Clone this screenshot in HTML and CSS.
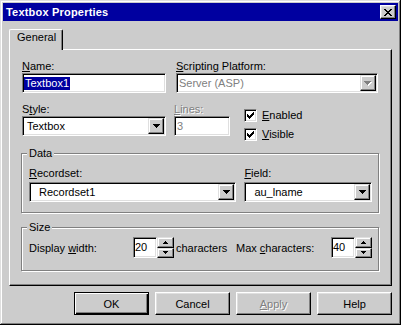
FILE: index.html
```html
<!DOCTYPE html>
<html lang="en">
<head>
    <meta charset="UTF-8">
    <title>Textbox Properties</title>
    <link rel="stylesheet" href="styles.css">
</head>
<body>
    <div class="window">
        <div class="titlebar">
            <span class="title">Textbox Properties</span>
            <button class="close" aria-label="Close">
                <svg width="8" height="7" viewBox="0 0 8 7"><path d="M0 0h2v1h-2z M6 0h2v1h-2z M1 1h2v1h-2z M5 1h2v1h-2z M2 2h4v1h-4z M3 3h2v1h-2z M2 4h4v1h-4z M1 5h2v1h-2z M5 5h2v1h-2z M0 6h2v1h-2z M6 6h2v1h-2z" fill="#000"/></svg>
            </button>
        </div>

        <div class="body">
            <div class="tabs">
                <div class="tab active">General</div>
            </div>

            <div class="panel">
                <div class="row">
                    <div class="field name-field">
                        <label><u>N</u>ame:</label>
                        <div class="edit"><span class="sel">Textbox1</span></div>
                    </div>
                    <div class="field script-field">
                        <label><u>S</u>cripting Platform:</label>
                        <div class="combo disabled">
                            <span class="value pad-2 dis">Server (ASP)</span>
                            <span class="drop">
                                <svg width="8" height="5" viewBox="0 0 8 5"><path d="M1 1h7v1h-1v1h-1v1h-1v1h-1v-1h-1v-1h-1v-1h-1z" fill="#fff"/><path d="M0 0h7v1h-1v1h-1v1h-1v1h-1v-1h-1v-1h-1v-1h-1z" fill="#808080"/></svg>
                            </span>
                        </div>
                    </div>
                </div>

                <div class="row row-style">
                    <div class="field style-field">
                        <label>S<u>t</u>yle:</label>
                        <div class="combo">
                            <span class="value pad-4">Textbox</span>
                            <span class="drop">
                                <svg width="7" height="4" viewBox="0 0 7 4"><path d="M0 0h7v1h-1v1h-1v1h-1v1h-1v-1h-1v-1h-1v-1h-1z" fill="#000"/></svg>
                            </span>
                        </div>
                    </div>
                    <div class="field lines-field">
                        <label class="dis"><u>L</u>ines:</label>
                        <div class="edit"><span class="value pad-1 dis">3</span></div>
                    </div>
                    <div class="checks">
                        <div class="check">
                            <span class="box">
                                <svg width="7" height="7" viewBox="0 0 7 7"><path d="M6 0h1v1h-1z M5 1h2v1h-2z M0 2h1v1h-1z M4 2h3v1h-3z M0 3h2v1h-2z M3 3h3v1h-3z M0 4h5v1h-5z M1 5h3v1h-3z M2 6h1v1h-1z" fill="#000"/></svg>
                            </span>
                            <span><u>E</u>nabled</span>
                        </div>
                        <div class="check">
                            <span class="box">
                                <svg width="7" height="7" viewBox="0 0 7 7"><path d="M6 0h1v1h-1z M5 1h2v1h-2z M0 2h1v1h-1z M4 2h3v1h-3z M0 3h2v1h-2z M3 3h3v1h-3z M0 4h5v1h-5z M1 5h3v1h-3z M2 6h1v1h-1z" fill="#000"/></svg>
                            </span>
                            <span><u>V</u>isible</span>
                        </div>
                    </div>
                </div>

                <fieldset class="group data-group">
                    <legend>Data</legend>
                    <div class="data-row">
                        <div class="field recordset-field">
                            <label><u>R</u>ecordset:</label>
                            <div class="combo">
                                <span class="value pad-8">Recordset1</span>
                                <span class="drop">
                                    <svg width="7" height="4" viewBox="0 0 7 4"><path d="M0 0h7v1h-1v1h-1v1h-1v1h-1v-1h-1v-1h-1v-1h-1z" fill="#000"/></svg>
                                </span>
                            </div>
                        </div>
                        <div class="field field-field">
                            <label><u>F</u>ield:</label>
                            <div class="combo">
                                <span class="value pad-8">au_lname</span>
                                <span class="drop">
                                    <svg width="7" height="4" viewBox="0 0 7 4"><path d="M0 0h7v1h-1v1h-1v1h-1v1h-1v-1h-1v-1h-1v-1h-1z" fill="#000"/></svg>
                                </span>
                            </div>
                        </div>
                    </div>
                </fieldset>

                <fieldset class="group size-group">
                    <legend>Size</legend>
                    <div class="size-row">
                        <span class="size-label">Display <u>w</u>idth:</span>
                        <div class="spin">
                            <div class="edit"><span class="value">20</span></div>
                            <div class="spin-btns">
                                <span class="spin-btn"><svg width="5" height="3" viewBox="0 0 5 3"><path d="M2 0h1v1h1v1h1v1h-5v-1h1v-1h1z" fill="#000"/></svg></span>
                                <span class="spin-btn"><svg width="5" height="3" viewBox="0 0 5 3"><path d="M0 0h5v1h-1v1h-1v1h-1v-1h-1v-1h-1z" fill="#000"/></svg></span>
                            </div>
                        </div>
                        <span class="unit">characters</span>
                        <span class="max-label">Max <u>c</u>haracters:</span>
                        <div class="spin">
                            <div class="edit"><span class="value">40</span></div>
                            <div class="spin-btns">
                                <span class="spin-btn"><svg width="5" height="3" viewBox="0 0 5 3"><path d="M2 0h1v1h1v1h1v1h-5v-1h1v-1h1z" fill="#000"/></svg></span>
                                <span class="spin-btn"><svg width="5" height="3" viewBox="0 0 5 3"><path d="M0 0h5v1h-1v1h-1v1h-1v-1h-1v-1h-1z" fill="#000"/></svg></span>
                            </div>
                        </div>
                    </div>
                </fieldset>
            </div>

            <div class="buttons">
                <button class="btn default">OK</button>
                <button class="btn">Cancel</button>
                <button class="btn"><span class="dis"><u>A</u>pply</span></button>
                <button class="btn">Help</button>
            </div>
        </div>
    </div>
</body>
</html>
```

FILE: styles.css
```css
/* Classic dialog look */
html, body {
    margin: 0;
    padding: 0;
}

body {
    font-family: "Liberation Sans", Arial, sans-serif;
    font-size: 11px;
    color: #000;
    background: #ccc;
}

.window {
    width: 401px;
    height: 325px;
    box-sizing: border-box;
    padding: 3px;
    background: #ccc;
    box-shadow: inset -1px -1px 0 #000, inset 1px 1px 0 #dfdfdf,
                inset -2px -2px 0 #808080, inset 2px 2px 0 #fff;
}

/* Title bar */
.titlebar {
    height: 18px;
    background: #0000a0;
    display: flex;
    align-items: center;
    justify-content: space-between;
    padding: 0 2px 0 3px;
}

.title {
    color: #fff;
    font-weight: bold;
    font-size: 11px;
    letter-spacing: 0.2px;
}

.close {
    width: 16px;
    height: 14px;
    padding: 0;
    display: flex;
    align-items: center;
    justify-content: center;
    box-sizing: border-box;
    background: #ccc;
    border: 1px solid;
    border-color: #fff #000 #000 #fff;
    box-shadow: inset -1px -1px 0 #808080, inset 1px 1px 0 #dfdfdf;
}

.close svg, .drop svg, .spin-btn svg, .box svg {
    display: block;
}

.body {
    padding: 8px 6px 0;
}

/* Tabs */
.tabs {
    display: flex;
    height: 20px;
}

.tab {
    position: relative;
    z-index: 1;
    width: 54px;
    height: 21px;
    box-sizing: border-box;
    padding: 1px 0 0 7px;
    line-height: 13px;
    background: #ccc;
    border-left: 1px solid #fff;
    border-top: 1px solid #fff;
    border-right: 1px solid #000;
    border-radius: 2px 2px 0 0;
    box-shadow: inset -1px 0 0 #808080;
}

.panel {
    height: 237px;
    box-sizing: border-box;
    padding: 10px 11px 0;
    border: 1px solid;
    border-color: #fff #000 #000 #fff;
    box-shadow: inset -1px -1px 0 #808080;
}

/* Rows and fields */
.row {
    display: flex;
    align-items: flex-start;
    margin-left: 1px;
}

.row-style {
    margin-top: 10px;
}

.field label {
    display: block;
    height: 13px;
    line-height: 13px;
}

.name-field { width: 144px; }
.script-field { width: 202px; margin-left: 10px; }
.style-field { width: 144px; }
.lines-field { width: 56px; margin-left: 8px; }

.dis {
    color: #808080;
    text-shadow: 1px 1px 0 #fff;
}

.edit, .combo {
    height: 20px;
    box-sizing: border-box;
    display: flex;
    align-items: center;
    background: #fff;
    border: 1px solid;
    border-color: #808080 #fff #fff #808080;
    box-shadow: inset 1px 1px 0 #000, inset -1px -1px 0 #dfdfdf;
    padding: 1px;
}

.sel {
    background: #0000a0;
    color: #fff;
    line-height: 13px;
    padding: 0 1px;
}

.value {
    flex: 1;
    line-height: 13px;
    white-space: nowrap;
}

.pad-1 { padding-left: 1px; }
.pad-2 { padding-left: 1px; }
.pad-4 { padding-left: 3px; }
.pad-8 { padding-left: 8px; }

.drop {
    width: 16px;
    height: 16px;
    box-sizing: border-box;
    display: flex;
    align-items: center;
    justify-content: center;
    background: #ccc;
    border: 1px solid;
    border-color: #dfdfdf #000 #000 #dfdfdf;
    box-shadow: inset -1px -1px 0 #808080, inset 1px 1px 0 #fff;
}

/* Check boxes */
.checks {
    display: flex;
    flex-direction: column;
    gap: 6px;
    margin: 6px 0 0 14px;
}

.check {
    display: flex;
    align-items: center;
    gap: 5px;
    height: 13px;
    line-height: 13px;
}

.box {
    width: 13px;
    height: 13px;
    box-sizing: border-box;
    display: flex;
    align-items: center;
    justify-content: center;
    background: #fff;
    border: 1px solid;
    border-color: #808080 #fff #fff #808080;
    box-shadow: inset 1px 1px 0 #000, inset -1px -1px 0 #dfdfdf;
}

/* Group boxes */
.group {
    margin: 6px 1px 0 0;
    padding: 7px 6px 10px 7px;
    min-width: 0;
    border: 1px solid #808080;
    box-shadow: 1px 1px 0 #fff, inset 1px 1px 0 #fff;
}

.group legend {
    margin-left: -2px;
    padding: 0 2px;
    line-height: 13px;
    background: #ccc;
}

.size-group {
    margin-top: 8px;
    padding: 3px 6px 12px 7px;
}

.data-row {
    display: flex;
    gap: 8px;
}

.data-row label {
    height: 15px;
}

.recordset-field { width: 208px; }
.field-field { width: 128px; }

.size-row {
    display: flex;
    align-items: center;
    height: 21px;
}

.size-label { width: 104px; }
.unit { width: 60px; margin-left: 2px; }
.max-label { width: 95px; }

.spin {
    display: flex;
    height: 21px;
}

.spin .edit {
    width: 24px;
    height: 21px;
    padding: 1px 0 1px 1px;
}

.spin-btns {
    width: 17px;
    display: flex;
    flex-direction: column;
}

.spin-btn {
    flex: 1;
    display: flex;
    align-items: center;
    justify-content: center;
    box-sizing: border-box;
    background: #ccc;
    border: 1px solid;
    border-color: #dfdfdf #000 #000 #dfdfdf;
    box-shadow: inset -1px -1px 0 #808080, inset 1px 1px 0 #fff;
}

/* Dialog buttons */
.buttons {
    display: flex;
    justify-content: flex-end;
    gap: 6px;
    margin-top: 6px;
}

.btn {
    width: 75px;
    height: 23px;
    box-sizing: border-box;
    padding: 0;
    font-family: inherit;
    font-size: 11px;
    color: #000;
    background: #ccc;
    border: 1px solid;
    border-color: #fff #000 #000 #fff;
    box-shadow: inset -1px -1px 0 #808080, inset 1px 1px 0 #dfdfdf;
}

.btn.default {
    border-color: #000;
    box-shadow: inset 1px 1px 0 #fff, inset -1px -1px 0 #000, inset -2px -2px 0 #808080;
}
```
